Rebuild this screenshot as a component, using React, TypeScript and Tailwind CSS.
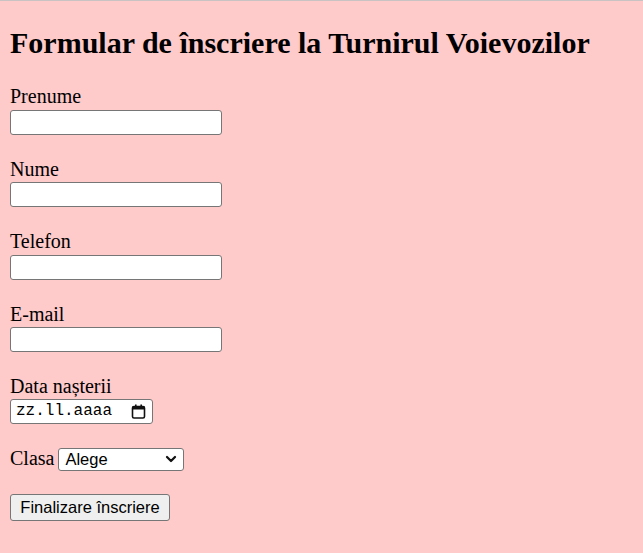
import { ChevronDown } from "lucide-react";

const fields = ["Prenume", "Nume", "Telefon", "E-mail"];

function CalendarIcon() {
  return (
    <svg width="15" height="15" viewBox="0 0 15 15" fill="none">
      <rect x="1.5" y="2.5" width="12" height="11.5" rx="1.5" stroke="#111" strokeWidth="1.6" />
      <rect x="1.5" y="2.5" width="12" height="3" fill="#111" />
      <rect x="4" y="0.5" width="1.6" height="3" fill="#111" />
      <rect x="9.4" y="0.5" width="1.6" height="3" fill="#111" />
    </svg>
  );
}

export default function App() {
  return (
    <div className="min-h-[553px] bg-[#ffcaca] border-t border-[#c9c3c3] pl-[10px] font-['Liberation_Serif',serif] text-[20px] text-black">
      <h2 className="pt-[25px] text-[30px] leading-[34px] font-bold">
        Formular de înscriere la Turnirul Voievozilor
      </h2>

      <form className="flex flex-col pt-[25px]" onSubmit={(e) => e.preventDefault()}>
        {fields.map((f) => (
          <div key={f} className="flex flex-col mb-[23px]">
            <label className="leading-[23px]">{f}</label>
            <input
              type="text"
              className="mt-[1.5px] h-[25px] w-[212px] bg-white border border-[#767676] rounded-[3px] px-[2px] font-['Liberation_Sans',sans-serif] text-[16.5px] outline-none"
            />
          </div>
        ))}

        <div className="flex flex-col">
          <label className="leading-[23px]">Data nașterii</label>
          <div className="mt-[1px] h-[24.5px] w-[143px] bg-white border border-[#767676] rounded-[3px] flex items-center pl-[5px] pr-[5px]">
            <span className="font-['Liberation_Mono',monospace] text-[16px] leading-none text-black">zz.ll.aaaa</span>
            <span className="ml-auto flex items-center pr-[1px]">
              <CalendarIcon />
            </span>
          </div>
        </div>

        <div className="flex items-start mt-[23px]">
          <span className="leading-[23px]">Clasa</span>
          <div className="ml-[4px] mt-[1.5px] h-[22.5px] w-[126px] bg-white border border-[#767676] rounded-[3px] flex items-center pl-[6px] pr-[4px] font-['Liberation_Sans',sans-serif] text-[16.5px] leading-none">
            <span>Alege</span>
            <ChevronDown className="ml-auto" size={16} strokeWidth={3.4} color="#111" />
          </div>
        </div>

        <div className="flex mt-[23.5px]">
          <button
            type="submit"
            className="h-[26.5px] w-[160px] bg-[#efefef] border border-[#767676] rounded-[3px] font-['Liberation_Sans',sans-serif] text-[16.5px] leading-none text-black"
          >
            Finalizare înscriere
          </button>
        </div>
      </form>
    </div>
  );
}
